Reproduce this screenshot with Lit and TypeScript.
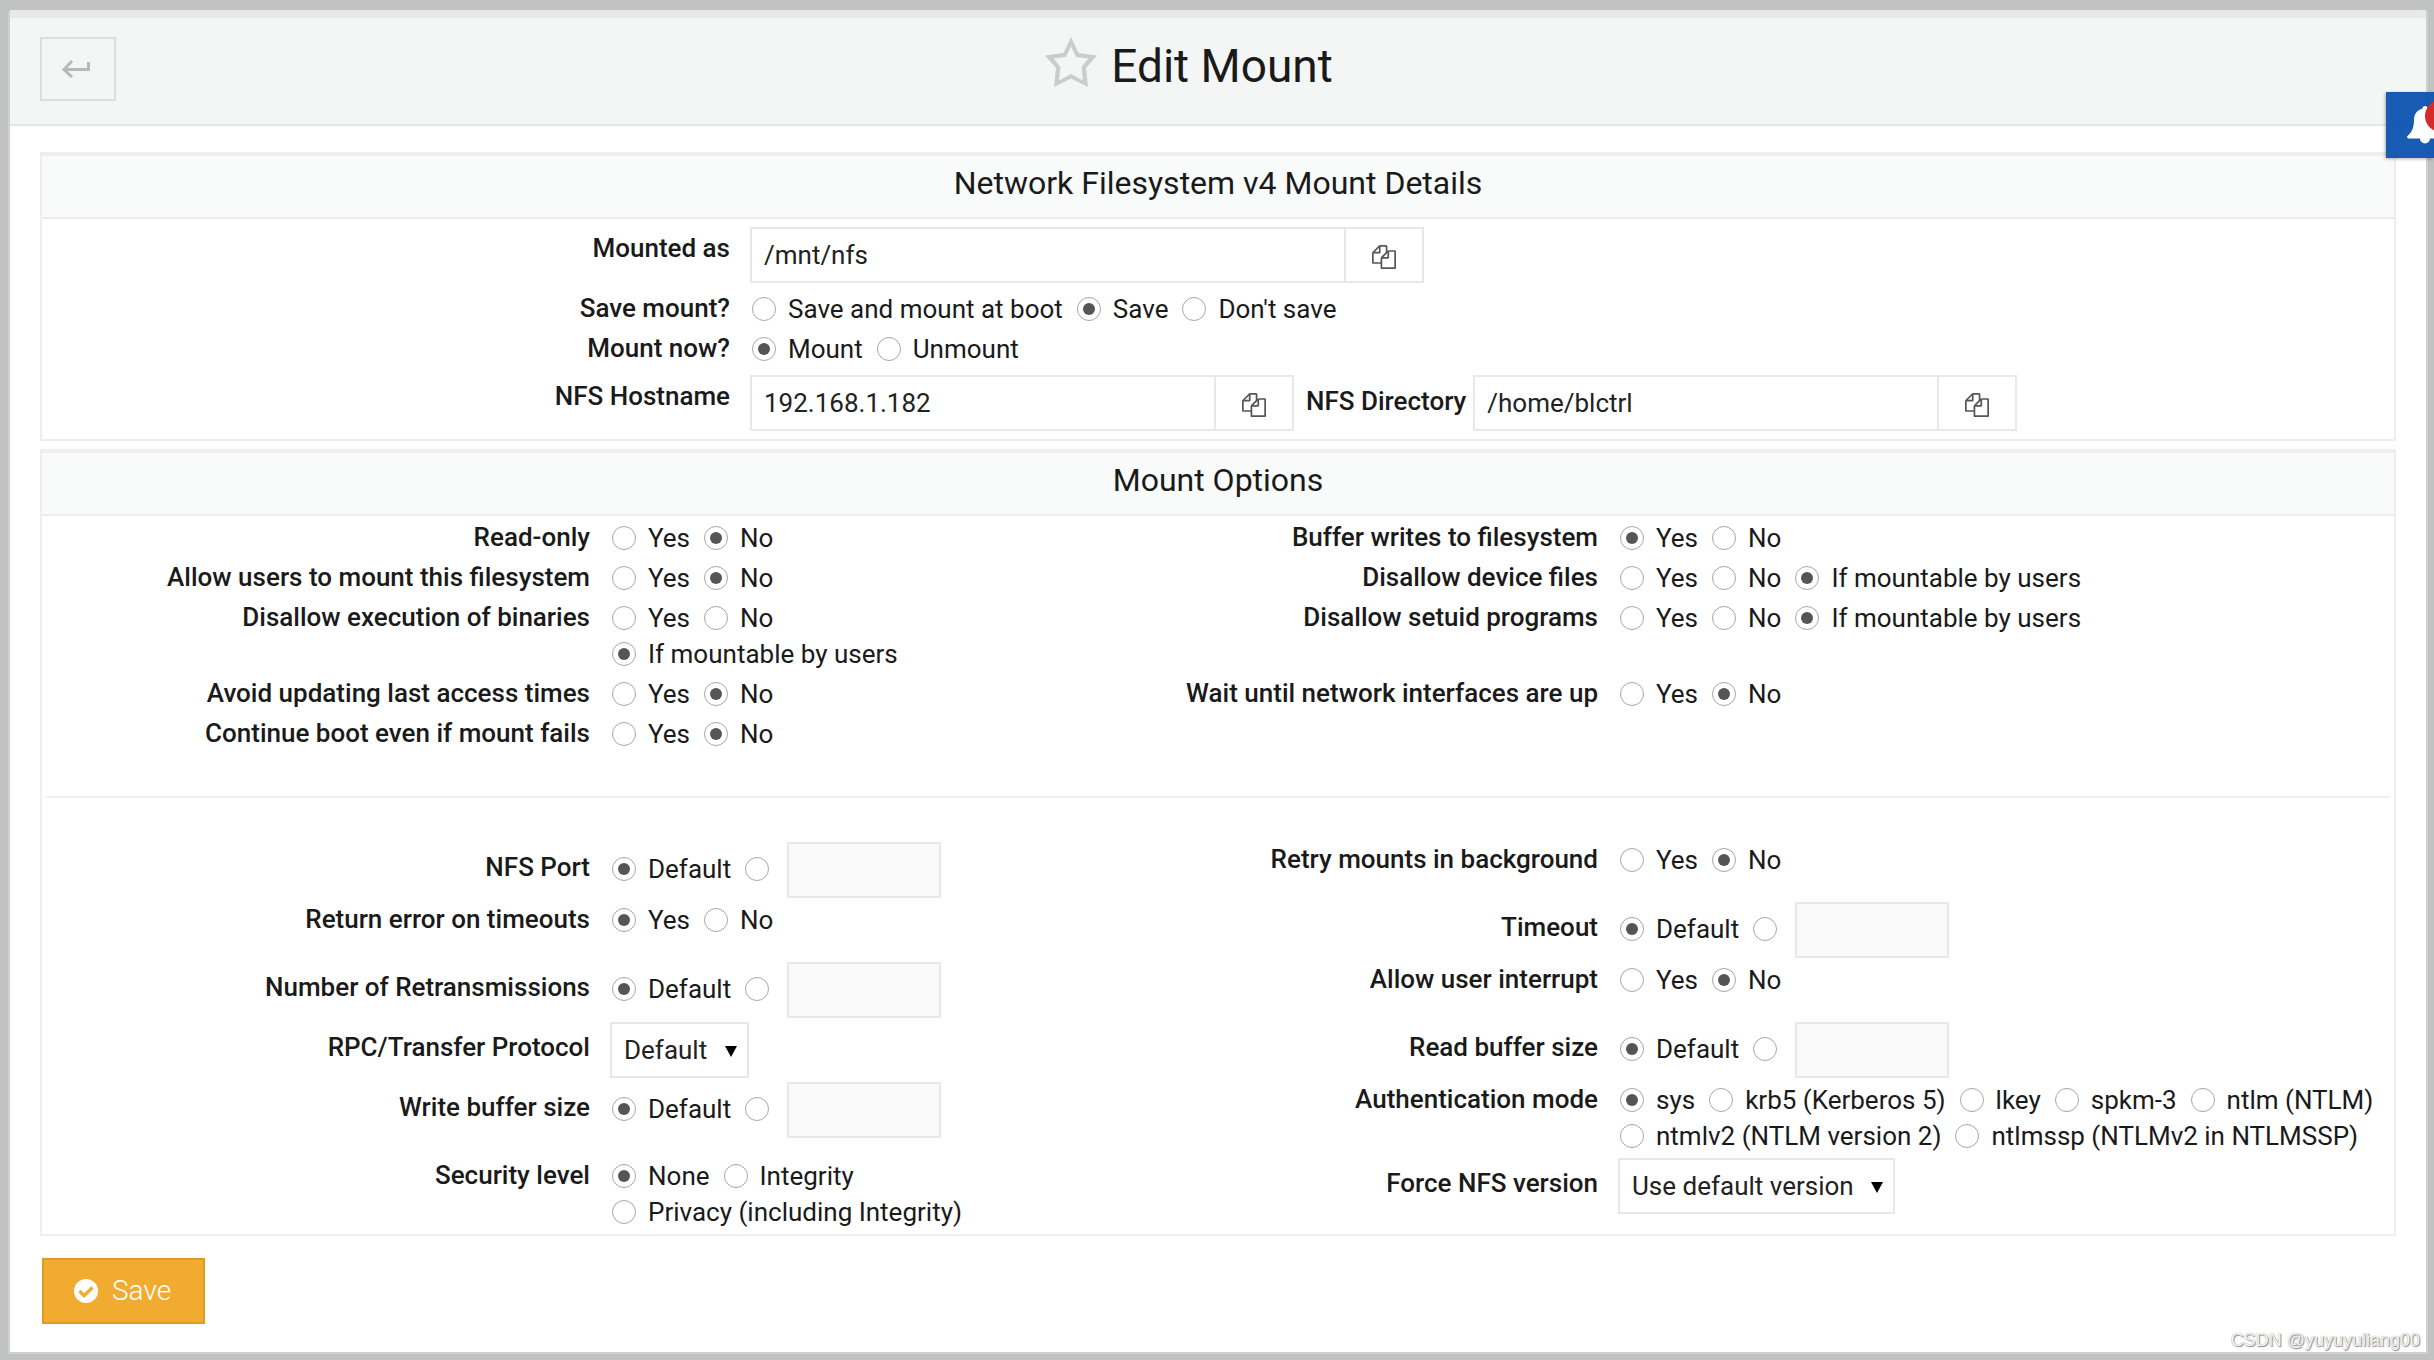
import { LitElement, html, css } from "lit";
import { customElement } from "lit/decorators.js";

type Choice = { label: string; checked?: boolean };
type Control =
  | { kind: "radios"; choices: Choice[] }
  | { kind: "value" }
  | { kind: "select"; options: string[] };
type Field = { id: string; label: string; control: Control };

const radios = (id: string, label: string, options: string[], checked: number): Field => ({
  id,
  label,
  control: { kind: "radios", choices: options.map((text, i) => ({ label: text, checked: i === checked })) },
});
const value = (id: string, label: string): Field => ({ id, label, control: { kind: "value" } });
const select = (id: string, label: string, options: string[]): Field => ({
  id,
  label,
  control: { kind: "select", options },
});

const YES_NO = ["Yes", "No"];
const YES_NO_USERS = ["Yes", "No", "If mountable by users"];

const GENERAL: (Field | null)[] = [
  radios("ro", "Read-only", YES_NO, 1),
  radios("sync", "Buffer writes to filesystem", YES_NO, 0),
  radios("user", "Allow users to mount this filesystem", YES_NO, 1),
  radios("nodev", "Disallow device files", YES_NO_USERS, 2),
  radios("noexec", "Disallow execution of binaries", YES_NO_USERS, 2),
  radios("nosuid", "Disallow setuid programs", YES_NO_USERS, 2),
  radios("noatime", "Avoid updating last access times", YES_NO, 1),
  radios("netdev", "Wait until network interfaces are up", YES_NO, 1),
  radios("nofail", "Continue boot even if mount fails", YES_NO, 1),
  null,
];

const NFS: (Field | null)[] = [
  value("port", "NFS Port"),
  radios("bg", "Retry mounts in background", YES_NO, 1),
  radios("soft", "Return error on timeouts", YES_NO, 0),
  value("timeo", "Timeout"),
  value("retrans", "Number of Retransmissions"),
  radios("intr", "Allow user interrupt", YES_NO, 1),
  select("proto", "RPC/Transfer Protocol", ["Default", "TCP", "UDP"]),
  value("rsize", "Read buffer size"),
  value("wsize", "Write buffer size"),
  radios(
    "auth",
    "Authentication mode",
    ["sys", "krb5 (Kerberos 5)", "lkey", "spkm-3", "ntlm (NTLM)", "ntmlv2 (NTLM version 2)", "ntlmssp (NTLMv2 in NTLMSSP)"],
    0,
  ),
  radios("sec", "Security level", ["None", "Integrity", "Privacy (including Integrity)"], 0),
  select("vers", "Force NFS version", ["Use default version", "2", "3", "4"]),
];

const copyIcon = html`<svg class="copy" viewBox="0 0 1792 1792" aria-hidden="true">
  <path
    d="M1696 384q40 0 68 28t28 68v1216q0 40-28 68t-68 28h-960q-40 0-68-28t-28-68v-288h-544q-40 0-68-28t-28-68v-672q0-40 20-88t48-76l408-408q28-28 76-48t88-20h416q40 0 68 28t28 68v328q68-40 128-40h416zm-544 213l-299 299h299v-299zm-640-384l-299 299h299v-299zm196 647l316-316v-416h-384v416q0 40-28 68t-68 28h-416v640h512v-256q0-40 20-88t48-76zm956 804v-1152h-384v416q0 40-28 68t-68 28h-416v640h896z"
  />
</svg>`;

@customElement("app-root")
export class AppRoot extends LitElement {
  static styles = css`
    :host {
      display: block;
      position: relative;
      box-sizing: border-box;
      min-height: 100vh;
      padding: 10px 6px 6px 8px;
      overflow: hidden;
      background: #c1c3c2;
      color: #1a1a1a;
      font: 400 26px/36px Roboto, "Liberation Sans", sans-serif;
    }
    *,
    *::before {
      box-sizing: border-box;
    }
    .card {
      border: solid #cfd1d0;
      border-width: 0 2px 2px;
      background: #fff;
      border-radius: 4px 4px 0 0;
    }
    .header {
      display: grid;
      grid-template-columns: 1fr auto 1fr;
      align-items: start;
      border-top: 8px solid #e9e9e9;
      border-bottom: 2px solid #e6e6e6;
      border-radius: 4px 4px 0 0;
      background: #f4f6f5;
      padding: 19px 30px 23px;
    }
    .back {
      display: flex;
      align-items: center;
      justify-content: center;
      width: 76px;
      height: 64px;
      border: 2px solid #dddddd;
      background: transparent;
      padding: 0 4px 0 0;
      color: #b9b9b9;
    }
    .back svg {
      width: 28px;
      height: 18px;
    }
    .title {
      display: flex;
      align-items: flex-start;
      gap: 14px;
      margin-right: 58px;
    }
    .title svg {
      width: 52px;
      height: 50px;
    }
    h1 {
      margin: 0;
      font-size: 46px;
      line-height: 58px;
      font-weight: 400;
    }
    .content {
      padding: 26px 30px 28px;
    }
    .panel {
      border: 2px solid #eeeeee;
      border-top-width: 4px;
      margin-bottom: 8px;
    }
    h2 {
      margin: 0;
      padding: 7px 0 14px;
      border-bottom: 2px solid #ebeceb;
      background: #f9fbfa;
      font-size: 32px;
      line-height: 40px;
      font-weight: 400;
      text-align: center;
    }
    .grid {
      display: grid;
      column-gap: 20px;
      padding: 2px;
    }
    .details {
      grid-template-columns: minmax(0, 686fr) minmax(0, 1642fr);
    }
    .options {
      grid-template-columns: minmax(0, 546fr) minmax(0, 390fr) minmax(0, 578fr) minmax(0, 774fr);
    }
    .name {
      padding: 1px 0 3px;
      font-weight: 500;
      text-align: right;
    }
    .name.tall {
      padding-top: 9px;
    }
    .cell {
      display: flex;
      flex-wrap: wrap;
      align-items: flex-start;
      padding: 2px 0;
    }
    .cell.roomy {
      padding: 6px 0;
    }
    .choice {
      display: inline-flex;
      align-items: center;
      gap: 12px;
      margin: 0 12px 0 2px;
      white-space: nowrap;
    }
    .radios {
      display: flex;
      flex-wrap: wrap;
    }
    .choice.tall {
      padding-top: 9px;
    }
    .choice.last {
      min-height: 45px;
      margin-right: 18px;
    }
    input[type="radio"] {
      appearance: none;
      flex: none;
      display: grid;
      place-content: center;
      width: 24px;
      height: 24px;
      margin: 0;
      border: 1px solid #a6a6a6;
      border-radius: 50%;
      background: #fff;
    }
    input[type="radio"]:checked::before {
      content: "";
      width: 12px;
      height: 12px;
      border-radius: 50%;
      background: #555555;
    }
    .text,
    select {
      height: 56px;
      border: 2px solid #e8e8e8;
      border-radius: 0;
      background: #fff;
      padding: 0 12px;
      color: #222222;
      font: inherit;
    }
    .text:disabled {
      width: 154px;
      background: #fafafa;
    }
    .group {
      display: flex;
    }
    .group .text {
      width: 466px;
    }
    .group.wide .text {
      width: 596px;
    }
    .group button {
      width: 80px;
      height: 56px;
      margin-left: -2px;
      border: 2px solid #e8e8e8;
      background: #fff;
      padding: 6px 0 0;
    }
    .copy {
      width: 24px;
      height: 24px;
      fill: #555555;
    }
    .inline-name {
      padding: 8px 7px 0 12px;
      font-weight: 500;
    }
    .select {
      display: grid;
      align-items: center;
      justify-items: end;
    }
    .select > * {
      grid-area: 1 / 1;
    }
    select {
      appearance: none;
      padding-right: 39px;
    }
    .select svg {
      width: 12px;
      height: 11px;
      margin: 2px 12px 0;
      pointer-events: none;
    }
    hr {
      grid-column: 1 / -1;
      justify-self: stretch;
      height: 2px;
      margin: 42px 2px;
      border: 0;
      background: #efefef;
    }
    .save {
      display: flex;
      align-items: center;
      gap: 14px;
      height: 66px;
      margin: 22px 0 0 2px;
      border: 2px solid #df9a22;
      background: #f1ab30;
      padding: 0 32px 0 30px;
      color: #fff;
      font: inherit;
      font-size: 28px;
      font-weight: 300;
    }
    .save svg {
      width: 24px;
      height: 24px;
    }
    .bell {
      position: absolute;
      top: 92px;
      right: 0;
      width: 48px;
      height: 66px;
      border: 0;
      padding: 0;
      background: rgba(16, 84, 175, 0.96);
      box-shadow: -1px 1px 3px rgba(0, 0, 0, 0.3);
      overflow: hidden;
    }
    .bell svg {
      display: block;
      width: 72px;
      height: 66px;
    }
    .watermark {
      position: absolute;
      right: 14px;
      bottom: 8px;
      color: #f4f4f4;
      font-family: "Liberation Sans", sans-serif;
      font-size: 18px;
      line-height: 24px;
      text-shadow: 1px 1px 1px #888888, 0 0 1px #999999;
    }
  `;

  private renderRadios(field: Field, choices: Choice[]) {
    return html`<div class="radios" role="radiogroup" aria-labelledby="${field.id}-name">
      ${choices.map(
        (c) => html`<label class="choice"
          ><input type="radio" name=${field.id} ?checked=${c.checked} />${c.label}</label
        >`,
      )}
    </div>`;
  }

  private renderControl(field: Field) {
    const c = field.control;
    if (c.kind === "radios") return this.renderRadios(field, c.choices);
    if (c.kind === "select") {
      return html`<div class="select">
        <select id=${field.id} aria-labelledby="${field.id}-name">
          ${c.options.map((o) => html`<option>${o}</option>`)}
        </select>
        <svg viewBox="0 0 12 11" aria-hidden="true"><path d="M0 0h12l-6 11z" /></svg>
      </div>`;
    }
    return html`<label class="choice tall"><input type="radio" name=${field.id} checked />Default</label>
      <label class="choice tall last"><input type="radio" name=${field.id} aria-label="${field.label} value" /></label>
      <input class="text" id=${field.id} type="text" disabled aria-labelledby="${field.id}-name" />`;
  }

  private renderField(field: Field | null) {
    if (!field) return html`<span></span><span></span>`;
    const tall = field.control.kind !== "radios";
    return html`${tall
        ? html`<label class="name tall" id="${field.id}-name" for=${field.id}>${field.label}</label>`
        : html`<span class="name" id="${field.id}-name">${field.label}</span>`}
      <div class="cell">${this.renderControl(field)}</div>`;
  }

  private renderPath(id: string, text: string, wide = false) {
    return html`<div class=${wide ? "group wide" : "group"}>
      <input class="text" id=${id} type="text" .value=${text} />
      <button type="button" aria-label="Browse">${copyIcon}</button>
    </div>`;
  }

  render() {
    return html`
      <main class="card">
        <header class="header">
          <button class="back" type="button" aria-label="Back">
            <svg viewBox="0 0 28 18" fill="none" stroke="currentColor" stroke-width="3" aria-hidden="true">
              <path d="M26.5 2v7.500H2.500M10 1L2 9.500 10 17" />
            </svg>
          </button>
          <div class="title">
            <svg viewBox="0 0 52 50" fill="#cccccc" fill-rule="evenodd" aria-hidden="true">
              <path
                d="M26 0l7.500 16L52 18.500 41 31l2 19-17-8.500L9 50l2-19L0 18.500 18.500 16zM26 9.500L21 20 8.500 21.500 15.500 30 14 43.500l12-6.500 12 6.500L36.500 30l7-8.500L31 20z"
              />
            </svg>
            <h1>Edit Mount</h1>
          </div>
        </header>
        <form class="content">
          <section class="panel">
            <h2>Network Filesystem v4 Mount Details</h2>
            <div class="grid details">
              <label class="name tall" for="dir">Mounted as</label>
              <div class="cell roomy">${this.renderPath("dir", "/mnt/nfs", true)}</div>
              ${this.renderField(radios("save", "Save mount?", ["Save and mount at boot", "Save", "Don't save"], 1))}
              ${this.renderField(radios("mount", "Mount now?", ["Mount", "Unmount"], 0))}
              <label class="name tall" for="host">NFS Hostname</label>
              <div class="cell roomy">
                ${this.renderPath("host", "192.168.1.182")}
                <label class="inline-name" for="path">NFS Directory</label>
                ${this.renderPath("path", "/home/blctrl")}
              </div>
            </div>
          </section>
          <section class="panel">
            <h2>Mount Options</h2>
            <div class="grid options">
              ${GENERAL.map((f) => this.renderField(f))}
              <hr />
              ${NFS.map((f) => this.renderField(f))}
            </div>
          </section>
          <button class="save" type="button">
            <svg viewBox="0 0 24 24" aria-hidden="true">
              <circle cx="12" cy="12" r="12" fill="#fff" />
              <path d="M5.500 12l4.700 4.700L18.500 8.500" fill="none" stroke="#f1ab30" stroke-width="3.400" />
            </svg>
            Save
          </button>
        </form>
      </main>
      <button class="bell" type="button" aria-label="Notifications">
        <svg viewBox="0 0 72 66" aria-hidden="true">
          <path
            d="M39 14a2.500 2.500 0 0 0-2.500 2.500C31 18 28 22.500 28 28c0 8-2.500 13-7 16.500 0 1.500 1 2 2.500 2H34a5 5 0 0 0 10 0h10.500c1.500 0 2.500-.5 2.500-2C52.500 41 50 36 50 28c0-5.500-3-10-8.500-11.500A2.500 2.500 0 0 0 39 14z"
            fill="#fff"
          />
          <circle cx="55" cy="24" r="16" fill="#d42a2a" />
        </svg>
      </button>
      <div class="watermark">CSDN @yuyuyuliang00</div>
    `;
  }
}
